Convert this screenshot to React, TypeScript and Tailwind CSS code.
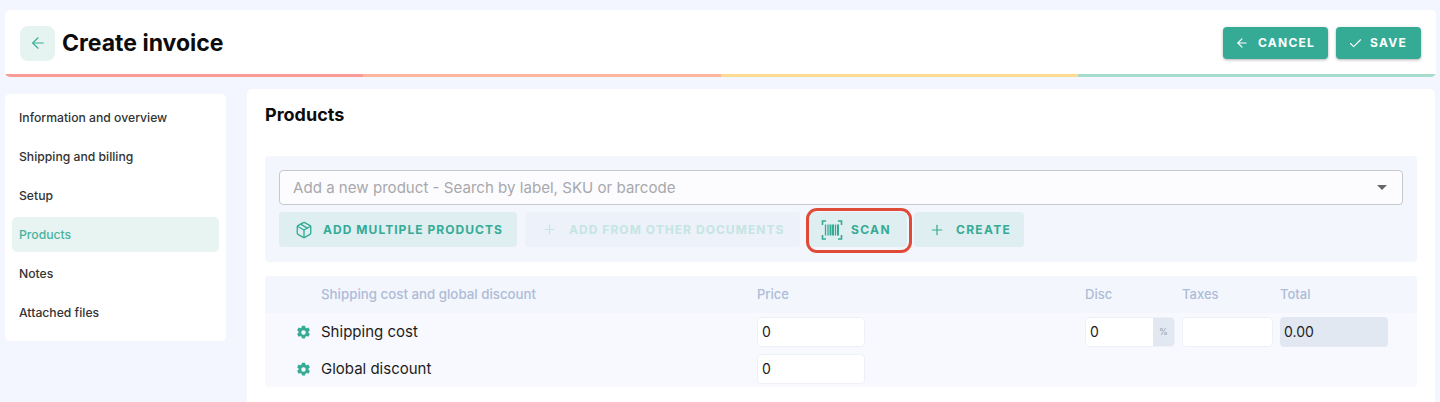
import React from "react";
import { ArrowLeft, Check, Plus, Package } from "lucide-react";

const nav = ["Information and overview", "Shipping and billing", "Setup", "Products", "Notes", "Attached files"];

function Gear() {
  return (
    <svg width="15" height="15" viewBox="0 0 24 24" className="text-[#35ab96]">
      <path
        fill="currentColor"
        fillRule="evenodd"
        d="M9.6 1h4.8l.7 3.1 1.7 1 3-1 2.4 4.1-2.3 2.2v1.9l2.3 2.2-2.4 4.1-3-1-1.7 1-.7 3.1H9.6l-.7-3.1-1.7-1-3 1-2.4-4.1 2.3-2.2v-1.9L1.800 8.200l2.4-4.100 3 1 1.700-1L9.600 1zM12 8.400a3.600 3.600 0 1 0 0 7.200 3.600 3.600 0 0 0 0-7.200z"
      />
    </svg>
  );
}

function Barcode() {
  return (
    <svg width="22" height="20" viewBox="0 0 22 20" fill="none" stroke="currentColor" strokeWidth="1.6">
      <path d="M5 1H1.500V5M17 1h3.500V5M5 19H1.500V15M17 19h3.500V15" />
      <path strokeWidth="1.300" d="M4.500 4.500v11M7 4.500v11M14.500 4.500v11" />
      <path strokeWidth="2" d="M9.500 4.500v11M12 4.500v11M17 4.500v11" />
    </svg>
  );
}

const btn = "h-[35px] rounded-[4px] flex items-center text-[12px] font-bold uppercase";
const cols = "grid grid-cols-[56px_436px_328px_97px_98px_108px]";

function TextInput({ value, className }: { value?: string; className: string }) {
  return (
    <div className={"h-[30px] bg-white border border-[#eef0f8] rounded-[4px] flex items-center px-1 pb-[2px] text-[14px] text-[#222] " + className}>
      {value}
    </div>
  );
}

export default function App() {
  return (
    <div className="h-[402px] overflow-hidden bg-[#f3f6fe] pt-[10px] px-[5px] font-['Inter',sans-serif] text-[#111]">
      <header className="w-[1431px] h-[67px] bg-white rounded-[5px] overflow-hidden flex flex-col">
        <div className="flex-1 flex items-center justify-between pt-[2px] pl-[15px] pr-[15px]">
          <div className="flex items-center gap-[7px]">
            <div className="w-[35px] h-[35px] rounded-[8px] bg-[#e6f4f1] flex items-center justify-center text-[#35ab96]">
              <ArrowLeft size={18} strokeWidth={1.5} />
            </div>
            <h1 className="text-[23px] font-bold text-[#0c0c0c]">Create invoice</h1>
          </div>
          <div className="flex items-center gap-[8px]">
            <button className="w-[105px] h-[32px] bg-[#35ab96] text-white rounded-[4px] shadow-[0_1px_3px_rgba(0,0,0,0.3)] flex items-center pl-[12px] gap-[9px] text-[12px] font-bold tracking-[1.25px]">
              <ArrowLeft size={14} strokeWidth={2} />
              CANCEL
            </button>
            <button className="w-[85px] h-[32px] bg-[#35ab96] text-white rounded-[4px] shadow-[0_1px_3px_rgba(0,0,0,0.3)] flex items-center pl-[12px] gap-[7px] text-[12px] font-bold tracking-[1.25px]">
              <Check size={15} strokeWidth={1.7} />
              SAVE
            </button>
          </div>
        </div>
        <div className="h-[3px] flex">
          <div className="flex-1 bg-[#fa9b97]" />
          <div className="flex-1 bg-[#fdb59d]" />
          <div className="flex-1 bg-[#fddc92]" />
          <div className="flex-1 bg-[#a7dccd]" />
        </div>
      </header>

      <div className="flex items-start gap-[21px] mt-[12px]">
        <nav className="w-[221px] h-[247px] mt-[5px] bg-white rounded-[5px] px-[7px] pt-[6px] flex flex-col shrink-0">
          {nav.map((n) => (
            <div
              key={n}
              className={
                "h-[35px] mb-[4px] px-[7px] pt-[1px] flex items-center rounded-[5px] text-[12.2px] font-medium " +
                (n === "Products" ? "bg-[#e8f4f1] text-[#48b29f]" : "text-[#333]")
              }
            >
              {n}
            </div>
          ))}
        </nav>

        <main className="w-[1189px] h-[320px] bg-white rounded-[5px] px-[18px] pt-[16px]">
          <h2 className="text-[18px] leading-[20px] font-bold text-[#0c0c0c]">Products</h2>

          <section className="mt-[31px] h-[106px] bg-[#f3f6fd] rounded-[4px] px-[14px] pt-[14px]">
            <div className="h-[35px] bg-[#fcfcff] border border-[#c6c8cf] rounded-[4px] flex items-center justify-between pl-[13px] pr-[15px] text-[15.100px] text-[#a8a8ac]">
              <span className="pt-[1px]">Add a new product - Search by label, SKU or barcode</span>
              <span className="w-0 h-0 border-x-[5px] border-x-transparent border-t-[5px] border-t-[#666]" />
            </div>
            <div className="flex mt-[7px]">
              <button className={btn + " w-[238px] tracking-[1.05px] bg-[#dfeef1] text-[#35ab96] pl-[16px] gap-[10px]"}>
                <Package size={18} strokeWidth={1.8} />
                Add multiple products
              </button>
              <button className={btn + " ml-[8px] w-[275px] tracking-[1.05px] bg-[#ecf1fa] text-[#c5e5e2] pl-[17px] gap-[12px]"}>
                <Plus size={15} strokeWidth={1.8} />
                Add from other documents
              </button>
              <div className="relative ml-[8px]">
                <button className={btn + " w-[99px] tracking-[1.35px] bg-[#dfeef1] text-[#35ab96] pl-[13px] gap-[8px]"}>
                  <Barcode />
                  Scan
                </button>
                <div className="absolute left-[-2px] top-[-4px] w-[106px] h-[45px] border-[3px] border-[#e04a38] rounded-[11px]" />
              </div>
              <button className={btn + " ml-[7px] w-[110px] tracking-[1.3px] bg-[#dfeef1] text-[#35ab96] pl-[15px] gap-[11px]"}>
                <Plus size={16} strokeWidth={1.8} />
                Create
              </button>
            </div>
          </section>

          <section className="mt-[14px] h-[111px] bg-[#f8f9fe] rounded-[4px] overflow-hidden">
            <div className={cols + " h-[37px] bg-[#f3f6fd] items-center text-[13px] font-medium text-[#aebcd7]"}>
              <span />
              <span className="text-[13.300px]">Shipping cost and global discount</span>
              <span>Price</span>
              <span>Disc</span>
              <span>Taxes</span>
              <span>Total</span>
            </div>
            <div className={cols + " mt-[4px] h-[30px] items-center text-[15px] text-[#1c1c1c]"}>
              <span className="pl-[31px] flex"><Gear /></span>
              <span>Shipping cost</span>
              <TextInput value="0" className="w-[108px]" />
              <div className="w-[90px] h-[30px] flex rounded-[4px] overflow-hidden border border-[#eef0f8] bg-white text-[14px]">
                <span className="flex-1 px-1 pb-[2px] flex items-center">0</span>
                <span className="w-[21px] bg-[#e2e8f2] text-[9px] text-[#9a9fa8] flex items-center justify-center">%</span>
              </div>
              <TextInput className="w-[91px]" />
              <div className="w-[108px] h-[30px] bg-[#e2e8f2] rounded-[4px] flex items-center px-1 pb-[2px] text-[14px] text-[#222]">0.00</div>
            </div>
            <div className={cols + " mt-[7px] h-[30px] items-center text-[15px] text-[#1c1c1c]"}>
              <span className="pl-[31px] flex"><Gear /></span>
              <span>Global discount</span>
              <TextInput value="0" className="w-[108px]" />
            </div>
          </section>
        </main>
      </div>
    </div>
  );
}
